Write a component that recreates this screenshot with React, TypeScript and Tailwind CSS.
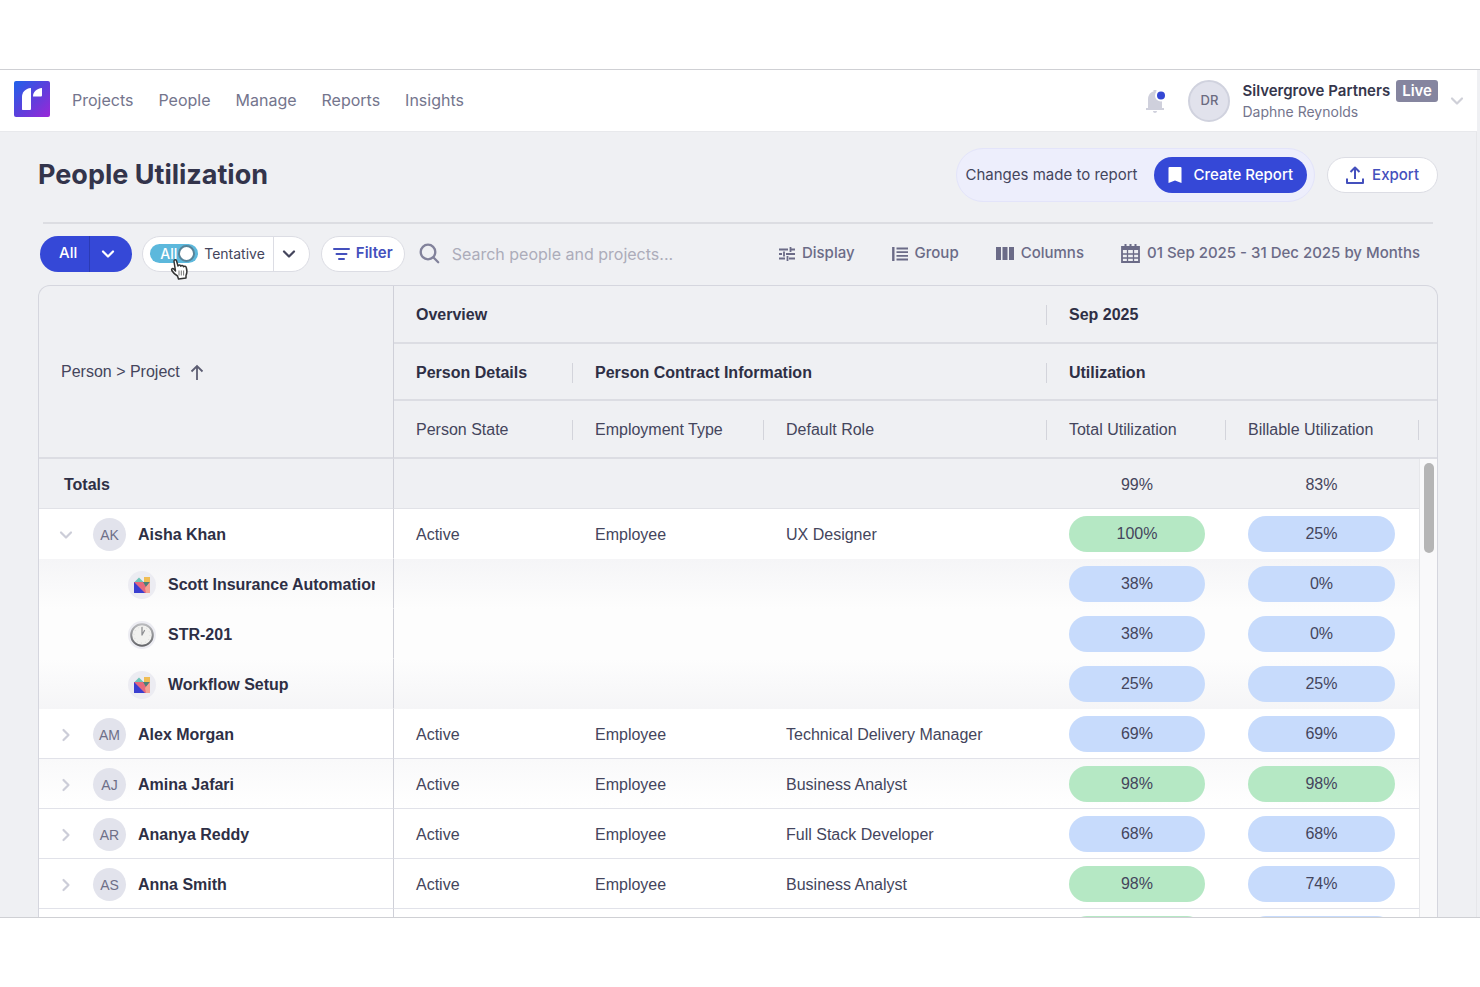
import type { ReactNode } from "react";

type Tone = "g" | "b";
type Row = {
  id: string;
  name: string;
  initials?: string;
  icon?: "shapes" | "clock";
  open?: boolean;
  role?: string;
  total: [string, Tone];
  billable: [string, Tone];
  shade?: string;
};

const rows: Row[] = [
  { id: "ak", name: "Aisha Khan", initials: "AK", open: true, role: "UX Designer", total: ["100%", "g"], billable: ["25%", "b"] },
  { id: "sc", name: "Scott Insurance Automation", icon: "shapes", total: ["38%", "b"], billable: ["0%", "b"], shade: "bg-linear-to-b from-[#f5f5f7] to-[#fdfdfd]" },
  { id: "st", name: "STR-201", icon: "clock", total: ["38%", "b"], billable: ["0%", "b"], shade: "bg-[#fdfdfd]" },
  { id: "wf", name: "Workflow Setup", icon: "shapes", total: ["25%", "b"], billable: ["25%", "b"], shade: "bg-linear-to-t from-[#f5f5f7] to-[#fdfdfd]" },
  { id: "am", name: "Alex Morgan", initials: "AM", role: "Technical Delivery Manager", total: ["69%", "b"], billable: ["69%", "b"] },
  { id: "aj", name: "Amina Jafari", initials: "AJ", role: "Business Analyst", total: ["98%", "g"], billable: ["98%", "g"], shade: "bg-linear-to-b from-[#f9f9fa] to-white" },
  { id: "ar", name: "Ananya Reddy", initials: "AR", role: "Full Stack Developer", total: ["68%", "b"], billable: ["68%", "b"] },
  { id: "as", name: "Anna Smith", initials: "AS", role: "Business Analyst", total: ["98%", "g"], billable: ["74%", "b"] },
  { id: "bc", name: "Ben Carter", initials: "BC", role: "UX Designer", total: ["98%", "g"], billable: ["70%", "b"] },
];

function Chevron({ className = "", right = false }: { className?: string; right?: boolean }) {
  return (
    <svg viewBox="0 0 14 14" className={`size-[14px] shrink-0 ${className}`} fill="none" stroke="currentColor" strokeWidth="2.200" strokeLinecap="round" strokeLinejoin="round" aria-hidden="true">
      <path d={right ? "M4.500 2l5 5-5 5" : "M2 4.500l5 5 5-5"} />
    </svg>
  );
}

function Logo() {
  return (
    <svg viewBox="0 0 36 36" className="size-9" aria-hidden="true">
      <defs>
        <linearGradient id="brand" x1="0" y1="0" x2="1" y2="1">
          <stop offset="0" stopColor="#1f62ea" />
          <stop offset=".5" stopColor="#5b40dc" />
          <stop offset="1" stopColor="#9a27d8" />
        </linearGradient>
      </defs>
      <rect width="36" height="36" rx="2" fill="url(#brand)" />
      <path d="M8 28.500V16c0-4.500 3-8.500 9-9v20.500c0 1-.5 1.500-1.500 1.500H8.500z" fill="#fff" />
      <path d="M19 15.500C19 11 22.500 7.500 28 7v7c0 1-.5 1.500-1.500 1.500z" fill="#fff" />
    </svg>
  );
}

function ShapesIcon() {
  return (
    <svg viewBox="0 0 16 16" className="size-4" aria-hidden="true">
      <path d="M0 5.500L5 .5l5 5z" fill="#6fc3b8" />
      <rect x="10" y="0" width="6" height="5.500" fill="#f0bd55" />
      <rect x="0" y="5" width="16" height="11" fill="#e8697c" />
      <path d="M0 5v11h11z" fill="#3a3fd0" />
      <path d="M9 5h7l-4 5z" fill="#4e8078" />
      <path d="M16 5v11h-4l-1-5z" fill="#f3a292" />
    </svg>
  );
}

function ClockIcon() {
  return (
    <svg viewBox="0 0 24 24" className="size-6" aria-hidden="true">
      <defs>
        <linearGradient id="rim" x1="0" y1="0" x2="0" y2="1">
          <stop offset="0" stopColor="#b9babd" />
          <stop offset="1" stopColor="#66676b" />
        </linearGradient>
      </defs>
      <circle cx="12" cy="12" r="10.800" fill="#f1f1ef" stroke="url(#rim)" strokeWidth="2" />
      <circle cx="12" cy="12" r="8" fill="none" stroke="#dcdcda" strokeWidth="1" strokeDasharray="1 3.190" />
      <path d="M12 12V4.500M12 12l2.500-4.500" stroke="#8f9093" strokeWidth="1.300" strokeLinecap="round" />
    </svg>
  );
}

function Pill({ value }: { value: [string, Tone] }) {
  return (
    <span className={`flex h-9 items-center justify-center rounded-full ${value[1] === "g" ? "bg-[#b5e8c4]" : "bg-[#c7dbfc]"}`}>
      {value[0]}
    </span>
  );
}

function HeadCell({ children, span = 1, bold = false, end = false }: { children: ReactNode; span?: number; bold?: boolean; end?: boolean }) {
  return (
    <th colSpan={span} scope="col" className={`border-b-2 border-[#dcdde3] p-0 pt-[2px] text-left ${bold ? "font-bold text-[#2e2f45]" : "font-normal"}`}>
      <div className="flex items-center">
        <span className="flex-1 pl-[22px]">{children}</span>
        {end && <span className="h-5 w-px bg-[#d3d4db]" />}
      </div>
    </th>
  );
}

function Tool({ icon, children }: { icon: ReactNode; children: ReactNode }) {
  return (
    <button type="button" className="flex items-center gap-[7px] whitespace-nowrap text-[15px] font-medium text-[#6b6b87]">
      {icon}
      {children}
    </button>
  );
}

export default function App() {
  return (
    <div className="flex h-screen flex-col overflow-hidden bg-white py-[69px] font-['Inter','Liberation_Sans',sans-serif] text-[#44455c]">
      <div className="flex min-h-0 flex-1 flex-col overflow-hidden border-y border-[#cfd0d4] bg-[#eff0f3]">
        <header className="mr-[3px] flex h-[62px] shrink-0 items-center border-b border-[#e8e9ec] bg-white pl-[14px] pr-[13px]">
          <a href="#home" aria-label="Home" className="pb-1"><Logo /></a>
          <nav className="ml-[22px] flex gap-[25px] pb-[2px] text-base text-[#74758d]">
            {["Projects", "People", "Manage", "Reports", "Insights"].map((n) => (
              <a key={n} href={`#${n}`}>{n}</a>
            ))}
          </nav>
          <button type="button" aria-label="Notifications" className="ml-auto">
            <svg viewBox="0 0 24 26" className="h-[26px] w-6" aria-hidden="true">
              <path d="M4 20v-8.500C4 6.500 7 4 9.500 3.500V2h3v1.500C16 5 18 7.500 18 11.500V20h2v2H2v-2zM9 23h4c0 1.200-.9 2-2 2s-2-.8-2-2z" fill="#cfd0dc" />
              <circle cx="17" cy="7.500" r="6" fill="#fff" />
              <circle cx="17" cy="7.500" r="4" fill="#3447d4" />
            </svg>
          </button>
          <span className="ml-5 flex size-[42px] items-center justify-center rounded-full border-2 border-[#d0d2de] bg-[#e1e2ec] text-[13px] font-medium text-[#6b6b80]">DR</span>
          <div className="ml-3 text-sm">
            <div className="flex items-center gap-[6px] font-semibold leading-[22px] text-[#35364c]">
              <span className="text-[15px]">Silvergrove Partners</span>
              <span className="rounded-[3px] bg-[#85859f] px-[6px] text-[15px] text-white">Live</span>
            </div>
            <div className="leading-5 text-[#74758d]">Daphne Reynolds</div>
          </div>
          <button type="button" aria-label="Account menu" className="ml-3"><Chevron className="text-[#cfd0d8]" /></button>
        </header>

        <main className="mr-[3px] flex min-h-0 flex-1 flex-col border-r border-[#e6e7ea] px-[38px]">
          <div className="flex h-[90px] shrink-0 items-center pb-1">
            <h1 className="text-[27px] font-bold text-[#33344b]">People Utilization</h1>
            <div className="ml-auto flex h-[54px] items-center gap-4 rounded-full border border-[#e3e4fa] bg-[#edeefc] pl-[9px] pr-[7px]">
              <span className="text-[15px]">Changes made to report</span>
              <button type="button" className="flex h-9 items-center gap-3 rounded-full bg-[#3548d7] px-[14px] text-[15px] font-medium text-white">
                <svg viewBox="0 0 14 16" className="h-4 w-[14px]" aria-hidden="true"><path d="M1.500 0h11a1 1 0 0 1 1 1v15L7 13.500.5 16V1a1 1 0 0 1 1-1z" fill="currentColor" /></svg>
                Create Report
              </button>
            </div>
            <button type="button" className="ml-3 flex h-9 items-center gap-2 rounded-full border border-[#dcdde4] bg-white px-[18px] text-[15px] font-medium text-[#4450bd]">
              <svg viewBox="0 0 18 18" className="size-[18px]" fill="none" stroke="currentColor" strokeWidth="2" strokeLinejoin="round" aria-hidden="true"><path d="M1 12.500V17h16v-4.500M9 13V2M4.500 6L9 1.500 13.500 6" /></svg>
              Export
            </button>
          </div>

          <div className="mx-[5px] h-[2px] shrink-0 bg-[#dcdde2]" />

          <div className="flex h-[61px] shrink-0 items-center pb-[2px]">
            <div className="ml-[2px] flex h-9 overflow-hidden rounded-full bg-[#3548d7] text-[15px] font-medium text-white">
              <button type="button" className="border-r border-[#2b3bb5] pl-[19px] pr-3">All</button>
              <button type="button" aria-label="More scopes" className="pl-[11px] pr-[17px]"><Chevron /></button>
            </div>
            <div className="ml-[10px] flex h-9 items-center rounded-full border border-[#dcdde4] bg-white pl-[7px]">
              <button type="button" role="switch" aria-checked="true" aria-labelledby="tentative" className="relative flex h-[19px] w-12 items-center rounded-full bg-[#5cb8dc] pl-[10px] text-sm font-medium text-white">
                All
                <span className="absolute right-[3px] top-[1px] size-[17px] rounded-full border-2 border-[#568399] bg-white" />
                <svg viewBox="0 0 20 22" className="absolute left-5 top-[14px] z-10 h-[22px] w-5" aria-hidden="true">
                  <path d="M5.500 13L4 3.500C3.700 1.500 6 1 6.500 2.800L8 8c.5-1.500 2.500-1.300 2.800.2.600-1.200 2.400-.9 2.700.5.800-1 2.500-.6 2.800.8.700 2.500 1.200 5-.3 8v2.500l-7.500 1L7.500 18C5 16.500 3 14.500 1.800 12.500c-.8-1.600 1-2.600 2.200-1.300z" fill="#fff" stroke="#333" strokeWidth="1.500" strokeLinejoin="round" />
                  <path d="M9 12.500v5M11.300 12.500v5M13.600 12.500v5" stroke="#777" />
                </svg>
              </button>
              <span id="tentative" className="pl-[6px] pr-2 text-sm">Tentative</span>
              <button type="button" aria-label="Tentative options" className="flex h-full items-center border-l border-[#dcdde4] pl-2 pr-[13px]"><Chevron /></button>
            </div>
            <button type="button" className="ml-[11px] flex h-9 items-center gap-[6px] rounded-full border border-[#dcdde4] bg-white px-[11px] text-[15px] font-semibold text-[#4450bd]">
              <svg viewBox="0 0 17 14" className="h-[14px] w-[17px]" stroke="currentColor" strokeWidth="2" strokeLinecap="round" aria-hidden="true"><path d="M1 2h15M3.500 7h10M6 12h5" /></svg>
              Filter
            </button>
            <label className="ml-[14px] flex flex-1 items-center gap-3">
              <svg viewBox="0 0 21 21" className="size-[21px] shrink-0" fill="none" stroke="#82829b" strokeWidth="2.300" strokeLinecap="round" aria-hidden="true"><circle cx="9" cy="9" r="7.300" /><path d="M14.500 14.500l4.700 4.700" /></svg>
              <input type="search" aria-label="Search people and projects" placeholder="Search people and projects..." className="w-full min-w-0 bg-transparent text-base outline-none placeholder:text-[#acacba]" />
            </label>
            <div className="flex items-center gap-[37px] pr-[18px]">
              <Tool icon={<svg viewBox="0 0 16 14" className="h-[14px] w-4" stroke="currentColor" strokeWidth="1.800" aria-hidden="true"><path d="M0 2.500h9M12 2.500h4M11.500 0v5M0 7h3M7 7h9M5 4.500v5M0 11.500h6M10 11.500h6M8.500 9v5" /></svg>}>Display</Tool>
              <Tool icon={<svg viewBox="0 0 16 14" className="h-[14px] w-4" stroke="currentColor" strokeWidth="2" aria-hidden="true"><path d="M1.300 0v14" strokeWidth="2.400" /><path d="M4.500 1.500H16M4.500 5.200H16M4.500 8.800H16M4.500 12.500H16" strokeWidth="1.800" /></svg>}>Group</Tool>
              <Tool icon={<svg viewBox="0 0 18 13" className="h-[13px] w-[18px]" fill="currentColor" aria-hidden="true"><path d="M0 0h5v13H0zM6.500 0h5v13h-5zM13 0h5v13h-5z" /></svg>}>Columns</Tool>
              <Tool icon={<svg viewBox="0 0 19 19" className="size-[19px]" fill="none" stroke="currentColor" aria-hidden="true"><path d="M1 3h17v15H1z" strokeWidth="1.800" /><path d="M1 4.500h17" strokeWidth="3" /><path d="M4.500 0v3M9.500 0v3M14.500 0v3" strokeWidth="2" /><path d="M6.500 6v12M12.500 6v12M1 10h17M1 14h17" strokeWidth="1.300" /></svg>}>01 Sep 2025 - 31 Dec 2025 by Months</Tool>
            </div>
          </div>

          <div className="min-h-0 flex-1 overflow-hidden rounded-t-xl border border-b-0 border-[#d5d6de] font-['Liberation_Sans',Arial,sans-serif] text-base">
            <table className="w-full table-fixed border-separate border-spacing-0">
              <colgroup>
                <col className="w-[355px]" />
                <col className="w-[179px]" />
                <col className="w-[191px]" />
                <col />
                <col className="w-[179px]" />
                <col className="w-[193px]" />
                <col className="w-[18px]" />
              </colgroup>
              <thead>
                <tr className="h-[58px]">
                  <th rowSpan={3} scope="col" className="border-b-2 border-r border-b-[#dcdde3] border-r-[#cfd0d8] p-0 pl-[22px] text-left font-normal">
                    <button type="button" className="flex items-center gap-[10px]">
                      Person &gt; Project
                      <svg viewBox="0 0 14 16" className="h-4 w-[14px]" fill="none" stroke="#5c5d72" strokeWidth="1.800" aria-hidden="true"><path d="M7 16V2M1.500 7.500L7 2l5.500 5.500" /></svg>
                    </button>
                  </th>
                  <HeadCell span={3} bold end>Overview</HeadCell>
                  <HeadCell span={3} bold>Sep 2025</HeadCell>
                </tr>
                <tr className="h-[57px]">
                  <HeadCell bold end>Person Details</HeadCell>
                  <HeadCell span={2} bold end>Person Contract Information</HeadCell>
                  <HeadCell span={3} bold>Utilization</HeadCell>
                </tr>
                <tr className="h-[58px]">
                  <HeadCell end>Person State</HeadCell>
                  <HeadCell end>Employment Type</HeadCell>
                  <HeadCell end>Default Role</HeadCell>
                  <HeadCell end>Total Utilization</HeadCell>
                  <HeadCell end>Billable Utilization</HeadCell>
                  <td className="border-b-2 border-[#dcdde3]" />
                </tr>
              </thead>
              <tbody>
                <tr className="h-[50px]">
                  <th scope="row" className="border-b border-r border-b-[#e1e2e7] border-r-[#cfd0d8] p-0 pl-[25px] pt-[2px] text-left font-bold text-[#2e2f45]">Totals</th>
                  <td colSpan={3} className="border-b border-[#e1e2e7]" />
                  <td className="border-b border-[#e1e2e7] p-0 pl-[22px] pr-[21px] pt-[2px] text-center">99%</td>
                  <td className="border-b border-[#e1e2e7] p-0 pl-[22px] pr-6 pt-[2px] text-center">83%</td>
                  <td rowSpan={rows.length + 1} className="border-l border-[#e6e7ea] bg-[#f9f9fa] p-0 align-top">
                    <div className="ml-1 mt-1 h-[90px] w-[10px] rounded-full bg-[#b5b5b5]" />
                  </td>
                </tr>
                {rows.map((r) => {
                  const line = r.open || r.icon ? "border-b border-b-transparent" : "border-b border-b-[#e1e2e9]";
                  return (
                    <tr key={r.id} className={`h-[50px] ${r.shade ?? "bg-white"}`}>
                      <th scope="row" className={`${line} border-r border-r-[#cfd0d8] p-0 pt-[2px] text-left font-bold text-[#2e2f45]`}>
                        {r.icon ? (
                          <div className="mr-[18px] flex items-center gap-3 overflow-hidden whitespace-nowrap pl-[89px]">
                            <span className="flex size-7 shrink-0 items-center justify-center rounded-full bg-[#ececf2]">
                              {r.icon === "clock" ? <ClockIcon /> : <ShapesIcon />}
                            </span>
                            {r.name}
                          </div>
                        ) : (
                          <div className="flex items-center pl-[20px]">
                            <button type="button" aria-label={`Toggle ${r.name}`} aria-expanded={!!r.open}><Chevron right={!r.open} className="text-[#cccdd8]" /></button>
                            <span className="ml-5 mr-3 flex size-[33px] items-center justify-center rounded-full bg-[#e2e3ec] text-sm font-medium text-[#6e6f88]">{r.initials}</span>
                            {r.name}
                          </div>
                        )}
                      </th>
                      <td className={`${line} p-0 pl-[22px] pt-[2px]`}>{r.role && "Active"}</td>
                      <td className={`${line} p-0 pl-[22px] pt-[2px]`}>{r.role && "Employee"}</td>
                      <td className={`${line} p-0 pl-[22px] pt-[2px]`}>{r.role}</td>
                      <td className={`${line} p-0 pl-[22px] pr-[21px]`}><Pill value={r.total} /></td>
                      <td className={`${line} p-0 pl-[22px] pr-6`}><Pill value={r.billable} /></td>
                    </tr>
                  );
                })}
              </tbody>
            </table>
          </div>
        </main>
      </div>
    </div>
  );
}
